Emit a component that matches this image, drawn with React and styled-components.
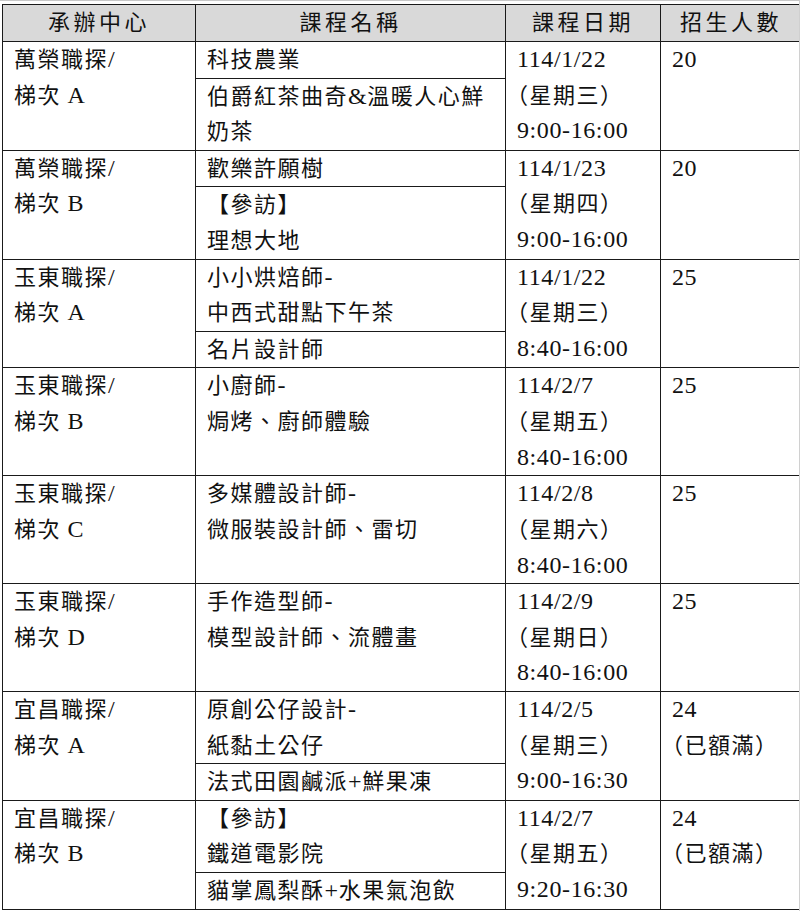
import React from "react";
import styled, { createGlobalStyle } from "styled-components";

const GlobalStyle = createGlobalStyle`
  html, body {
    margin: 0;
    padding: 0;
    background: #fff;
  }
  body {
    font-family: "Liberation Serif", "Noto Sans CJK TC", serif;
    color: #111;
  }
`;

const groups = [
  {
    center: ["萬榮職探/", "梯次 A"],
    courses: [["科技農業"], ["伯爵紅茶曲奇&溫暖人心鮮", "奶茶"]],
    date: ["114/1/22", "（星期三）", "9:00-16:00"],
    count: ["20"],
  },
  {
    center: ["萬榮職探/", "梯次 B"],
    courses: [["歡樂許願樹"], ["【參訪】", "理想大地"]],
    date: ["114/1/23", "（星期四）", "9:00-16:00"],
    count: ["20"],
  },
  {
    center: ["玉東職探/", "梯次 A"],
    courses: [["小小烘焙師-", "中西式甜點下午茶"], ["名片設計師"]],
    date: ["114/1/22", "（星期三）", "8:40-16:00"],
    count: ["25"],
  },
  {
    center: ["玉東職探/", "梯次 B"],
    courses: [["小廚師-", "焗烤、廚師體驗"]],
    date: ["114/2/7", "（星期五）", "8:40-16:00"],
    count: ["25"],
  },
  {
    center: ["玉東職探/", "梯次 C"],
    courses: [["多媒體設計師-", "微服裝設計師、雷切"]],
    date: ["114/2/8", "（星期六）", "8:40-16:00"],
    count: ["25"],
  },
  {
    center: ["玉東職探/", "梯次 D"],
    courses: [["手作造型師-", "模型設計師、流體畫"]],
    date: ["114/2/9", "（星期日）", "8:40-16:00"],
    count: ["25"],
  },
  {
    center: ["宜昌職探/", "梯次 A"],
    courses: [["原創公仔設計-", "紙黏土公仔"], ["法式田園鹹派+鮮果凍"]],
    date: ["114/2/5", "（星期三）", "9:00-16:30"],
    count: ["24", "（已額滿）"],
  },
  {
    center: ["宜昌職探/", "梯次 B"],
    courses: [["【參訪】", "鐵道電影院"], ["貓掌鳳梨酥+水果氣泡飲"]],
    date: ["114/2/7", "（星期五）", "9:20-16:30"],
    count: ["24", "（已額滿）"],
  },
];

// split a line into latin / cjk runs so the digits can be set a bit larger
function Text({ value }) {
  const parts = value.split(/([\x20-\x7E]+)/).filter(Boolean);
  return parts.map((p, i) =>
    /^[\x20-\x7E]+$/.test(p) ? <Latin key={i}>{p}</Latin> : <span key={i}>{p}</span>
  );
}

function Lines({ items }) {
  return items.map((t, j) => (
    <Line key={j}>
      <Text value={t} />
    </Line>
  ));
}

export default function App() {
  return (
    <>
      <GlobalStyle />
      <Page>
        <Table>
          <thead>
            <tr>
              <HeadCell $w={192}>承辦中心</HeadCell>
              <HeadCell $w={309}>課程名稱</HeadCell>
              <HeadCell $w={154}>課程日期</HeadCell>
              <HeadCell $w={140}>招生人數</HeadCell>
            </tr>
          </thead>
          <tbody>
            {groups.map((g, i) => (
              <tr key={i}>
                <Cell>
                  <Lines items={g.center} />
                </Cell>
                <Cell $flush>
                  <CourseList>
                    {g.courses.map((c, j) => (
                      <CourseItem key={j} $first={j === 0}>
                        <Lines items={c} />
                      </CourseItem>
                    ))}
                  </CourseList>
                </Cell>
                <Cell $halfPunct>
                  <Lines items={g.date} />
                </Cell>
                <Cell $halfPunct>
                  <Lines items={g.count} />
                </Cell>
              </tr>
            ))}
          </tbody>
        </Table>
      </Page>
    </>
  );
}

const Page = styled.div`
  box-sizing: border-box;
  width: 800px;
  height: 911px;
  border-top: 1px solid #c8c8c8;
  border-right: 1px solid #d0d0d0;
  padding: 3px 0 0 2px;
  overflow: hidden;
`;

const Table = styled.table`
  width: 795px;
  table-layout: fixed;
  border-collapse: collapse;
  font-size: 22px;
  letter-spacing: 1.5px;
`;

const HeadCell = styled.th`
  width: ${(p) => p.$w}px;
  height: 36px;
  padding: 0;
  background: #d9d9d9;
  border: 1px solid #1a1a1a;
  font-weight: 400;
  text-align: center;
  line-height: 36px;
  letter-spacing: 3.5px;
`;

const Cell = styled.td`
  vertical-align: top;
  padding: ${(p) => (p.$flush ? "0" : "0 10px 0 11px")};
  border: 1px solid #1a1a1a;
  text-align: left;
  font-feature-settings: ${(p) => (p.$halfPunct ? '"halt"' : "normal")};
`;

const CourseList = styled.div`
  display: flex;
  flex-direction: column;
`;

const CourseItem = styled.div`
  padding: 0 10px 0 11px;
  border-top: ${(p) => (p.$first ? "none" : "1px solid #1a1a1a")};
`;

const Line = styled.div`
  height: 35.62px;
  line-height: 35.62px;
  white-space: nowrap;
`;

const Latin = styled.span`
  font-family: "Liberation Serif", serif;
  font-size: 24px;
  letter-spacing: 0.6px;
`;
